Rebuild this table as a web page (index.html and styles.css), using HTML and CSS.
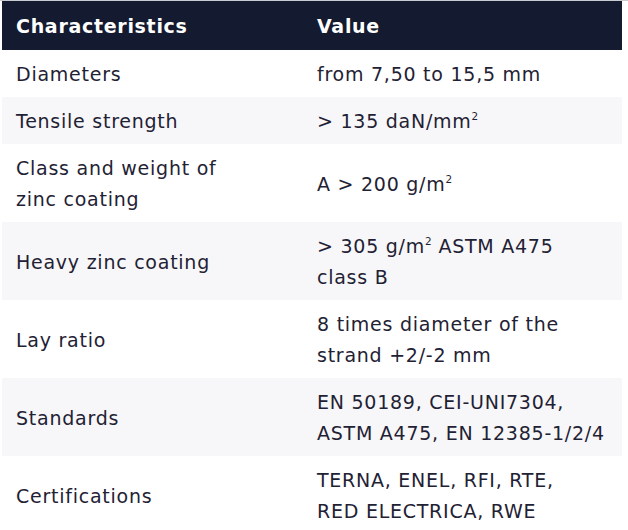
FILE: index.html
```html
<!DOCTYPE html>
<html>
<head>
<meta charset="utf-8">
<link rel="stylesheet" href="styles.css">
</head>
<body>
<div class="frame">
<table class="spec">
  <thead>
    <tr><th class="c1">Characteristics</th><th>Value</th></tr>
  </thead>
  <tbody>
    <tr><td>Diameters</td><td>from 7,50 to 15,5 mm</td></tr>
    <tr class="alt"><td>Tensile strength</td><td>&gt; 135 daN/mm<sup>2</sup></td></tr>
    <tr><td>Class and weight of<br>zinc coating</td><td>A &gt; 200 g/m<sup>2</sup></td></tr>
    <tr class="alt"><td>Heavy zinc coating</td><td>&gt; 305 g/m<sup>2</sup> ASTM A475<br>class B</td></tr>
    <tr><td>Lay ratio</td><td>8 times diameter of the<br>strand +2/-2 mm</td></tr>
    <tr class="alt"><td>Standards</td><td>EN 50189, CEI-UNI7304,<br>ASTM A475, EN 12385-1/2/4</td></tr>
    <tr><td>Certifications</td><td>TERNA, ENEL, RFI, RTE,<br>RED ELECTRICA, RWE</td></tr>
  </tbody>
</table>
</div>
</body>
</html>
```
FILE: styles.css
```css
html, body {
  margin: 0;
  padding: 0;
  background: #ffffff;
}
.frame {
  border-top: 1px solid #c9cacf;
  padding: 0 6px 0 2px;
  border-right: 1px solid #eeeff2;
  width: 620px;
}
.spec {
  width: 620px;
  table-layout: fixed;
  border-collapse: collapse;
  font-family: "DejaVu Sans", "Open Sans", sans-serif;
  font-size: 19px;
  letter-spacing: 0.75px;
  color: #1f2234;
}
.spec th {
  background: #141a2f;
  color: #ffffff;
  font-weight: 700;
  text-align: left;
  padding: 10px 14px 9px;
  line-height: 30px;
  font-size: 19px;
  letter-spacing: 0.7px;
}
.spec .c1 {
  width: 273px;
}
.spec td {
  padding: 9px 14px 7px;
  line-height: 31px;
  vertical-align: middle;
  white-space: nowrap;
}
.spec tr.alt td {
  background: #f7f7f9;
}
.spec sup {
  font-size: 0.55em;
  line-height: 0;
  vertical-align: 0.75em;
  letter-spacing: 0;
}
```
